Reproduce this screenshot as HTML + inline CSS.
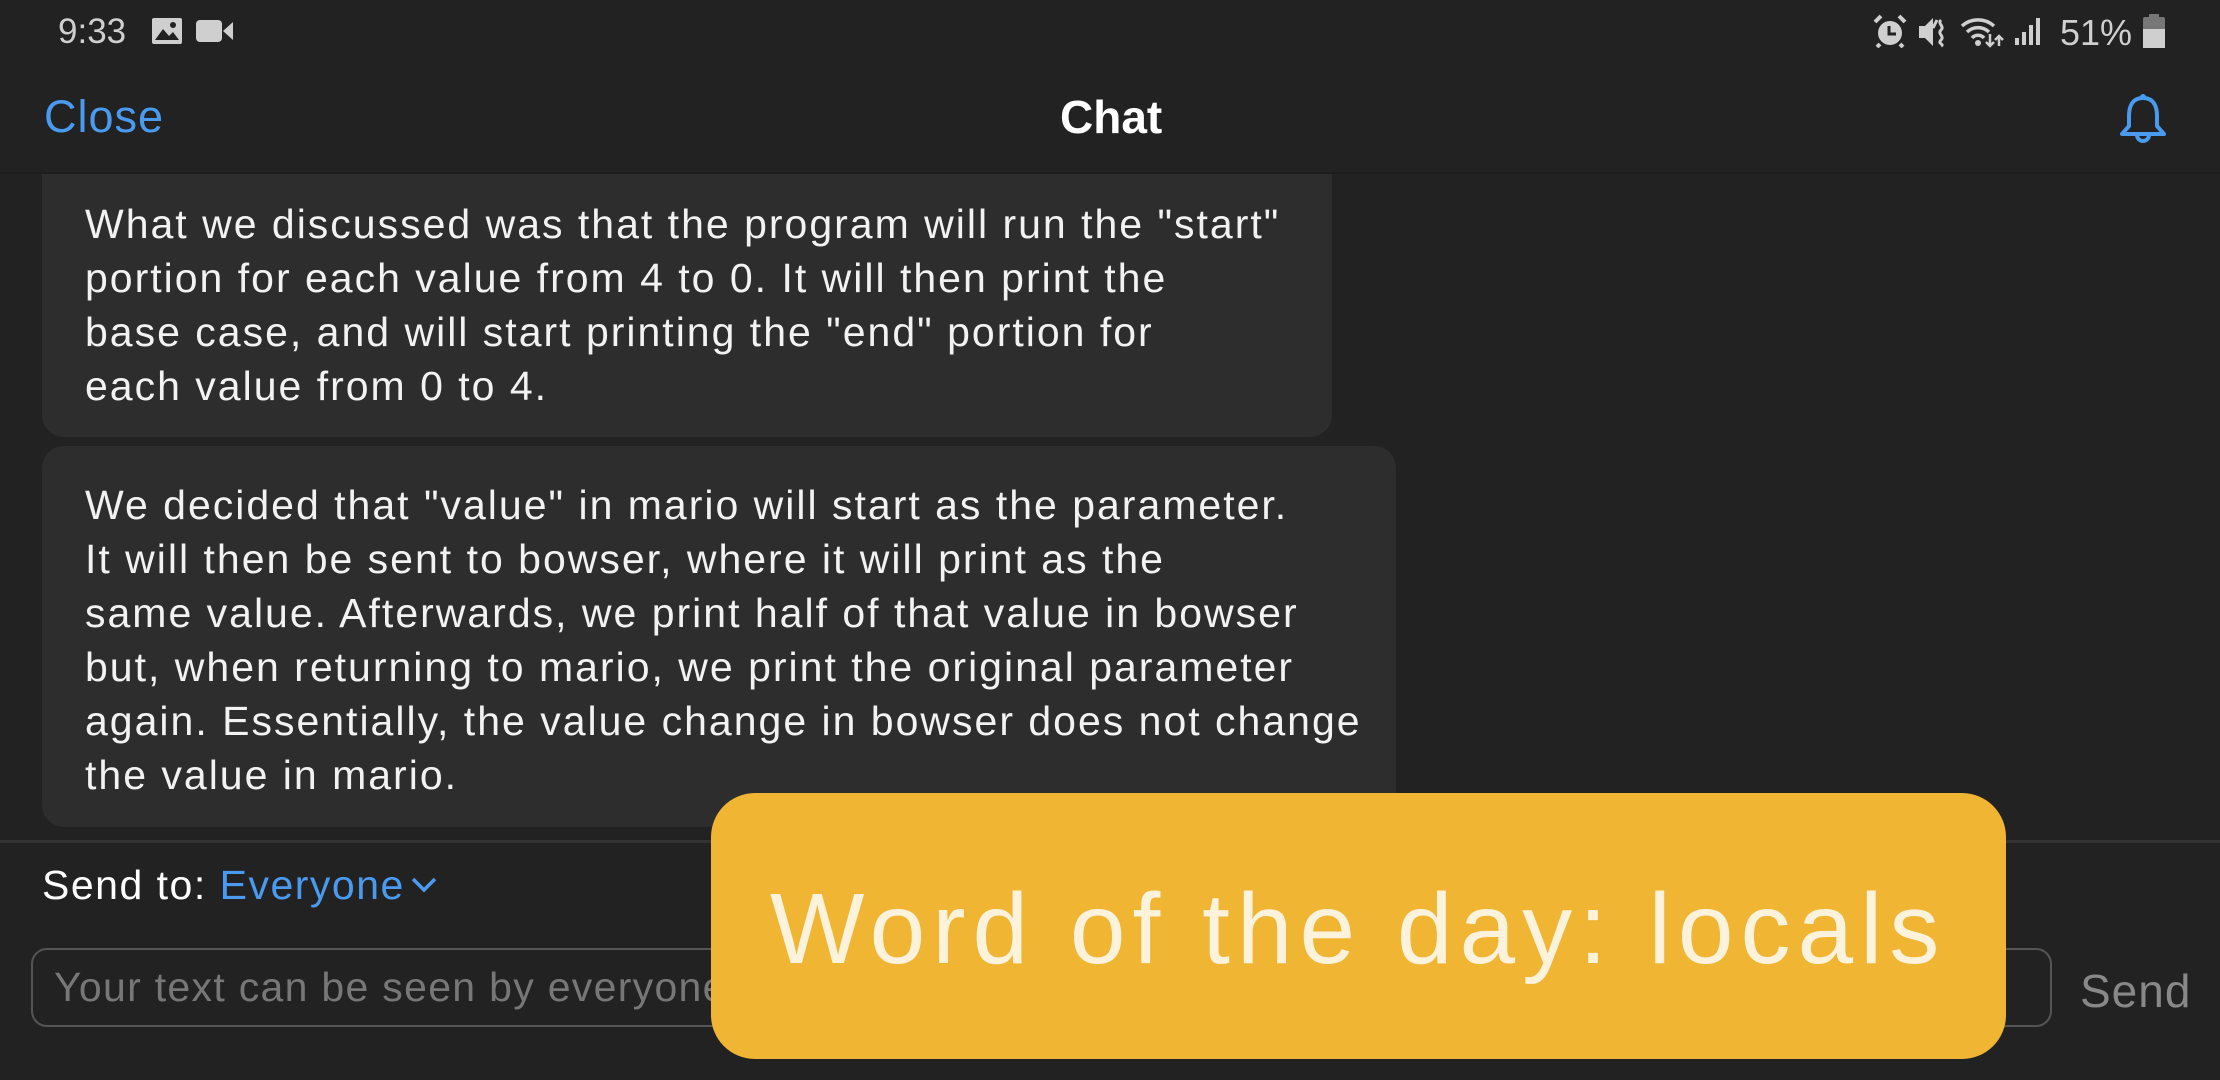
<!DOCTYPE html>
<html><head><meta charset="utf-8"><style>
*{margin:0;padding:0;box-sizing:border-box}
body{width:2220px;height:1080px;background:#222222;overflow:hidden;position:relative;font-family:"Liberation Sans",sans-serif;color:#fff}
.abs{position:absolute;white-space:nowrap}
.bubble{position:absolute;background:#2d2d2d;border-radius:22px}
.msg{position:absolute;left:85px;font-size:41px;letter-spacing:2px;line-height:54px;color:#f2f2f2;white-space:nowrap}
</style></head><body>
<!-- bubbles -->
<div class="bubble" style="left:42px;top:150px;width:1290px;height:287px"></div>
<div class="msg" style="top:197px">What we discussed was that the program will run the "start"<br>portion for each value from 4 to 0. It will then print the<br>base case, and will start printing the "end" portion for<br>each value from 0 to 4.</div>
<div class="bubble" style="left:42px;top:446px;width:1354px;height:381px"></div>
<div class="msg" style="top:478px">We decided that "value" in mario will start as the parameter.<br>It will then be sent to bowser, where it will print as the<br>same value. Afterwards, we print half of that value in bowser<br>but, when returning to mario, we print the original parameter<br>again. Essentially, the value change in bowser does not change<br>the value in mario.</div>
<!-- header bg -->
<div class="abs" style="left:0;top:0;width:2220px;height:172px;background:#222"></div>
<div class="abs" style="left:0;top:172px;width:2220px;height:2px;background:#1d1d1d"></div>
<!-- status bar -->
<div class="abs" style="left:58px;top:12px;font-size:35px;color:#cfcfcf">9:33</div>
<svg class="abs" style="left:151px;top:17px" width="32" height="28" viewBox="0 0 32 28"><rect x="1" y="1" width="30" height="26" rx="2" fill="#cfcfcf"/><path d="M4 23 L12 12 L18 19 L22 15 L28 23Z" fill="#222"/><circle cx="22" cy="8" r="3" fill="#222"/></svg>
<svg class="abs" style="left:196px;top:19px" width="38" height="24" viewBox="0 0 38 24"><rect x="0" y="1" width="26" height="22" rx="4" fill="#cfcfcf"/><path d="M27 12 L37 3 V21Z" fill="#cfcfcf"/></svg>
<svg class="abs" style="left:1872px;top:14px" width="36" height="34" viewBox="0 0 36 34"><circle cx="18" cy="19" r="12" fill="#cfcfcf"/><path d="M17 12v8h7" stroke="#222" stroke-width="3" fill="none"/><path d="M3 8 L9 2 M33 8 L27 2 M8 30 L5 33 M28 30 L31 33" stroke="#cfcfcf" stroke-width="4"/></svg>
<svg class="abs" style="left:1917px;top:16px" width="32" height="32" viewBox="0 0 32 32"><path d="M2 10h6l8-8v28l-8-8H2Z" fill="#cfcfcf"/><path d="M20 4 L16 12 M24 4c-4 4 4 6 0 10s4 6 0 10s4 4 0 6" stroke="#cfcfcf" stroke-width="3" fill="none"/></svg>
<svg class="abs" style="left:1960px;top:14px" width="44" height="34" viewBox="0 0 44 34"><path d="M2 12a24 24 0 0 1 32 0 M7 18a16 16 0 0 1 22 0 M12 24a8 8 0 0 1 12 0" stroke="#cfcfcf" stroke-width="3.5" fill="none"/><circle cx="18" cy="29" r="3" fill="#cfcfcf"/><path d="M30 20v12 M26 28l4 4 4-4 M39 32V22 M35 26l4-4 4 4" stroke="#cfcfcf" stroke-width="2.5" fill="none"/></svg>
<svg class="abs" style="left:2014px;top:16px" width="28" height="30" viewBox="0 0 28 30"><rect x="1" y="22" width="4" height="7" fill="#cfcfcf"/><rect x="8" y="16" width="4" height="13" fill="#cfcfcf"/><rect x="15" y="9" width="4" height="20" fill="#cfcfcf"/><rect x="22" y="2" width="4" height="27" fill="#cfcfcf"/></svg>
<div class="abs" style="left:2060px;top:12px;font-size:36px;color:#cfcfcf">51%</div>
<svg class="abs" style="left:2143px;top:14px" width="22" height="34" viewBox="0 0 22 34"><rect x="6" y="0" width="10" height="4" fill="#777"/><rect x="0" y="3" width="22" height="31" rx="2" fill="#777"/><rect x="0" y="15" width="22" height="19" fill="#cfcfcf"/></svg>
<!-- header -->
<div class="abs" style="left:44px;top:91px;font-size:45px;letter-spacing:1px;color:#4a9bf0">Close</div>
<div class="abs" style="left:1060px;top:90px;font-size:46px;font-weight:bold;color:#fff">Chat</div>
<svg class="abs" style="left:2117px;top:92px" width="52" height="54" viewBox="0 0 52 54"><path d="M26 6 C15 6 12 15 12 24 V34 L5 42 H47 L40 34 V24 C40 15 37 6 26 6Z" stroke="#4a9bf0" stroke-width="4" fill="none" stroke-linejoin="round"/><circle cx="26" cy="5" r="3" fill="#4a9bf0"/><path d="M20 43 a6 6 0 0 0 12 0" stroke="#4a9bf0" stroke-width="4" fill="none"/></svg>
<!-- bottom -->
<div class="abs" style="left:0;top:840px;width:2220px;height:3px;background:#333"></div>
<div class="abs" style="left:42px;top:862px;font-size:41px;letter-spacing:1.5px;color:#fff">Send to: <span style="color:#4a9bf0">Everyone</span></div>
<svg class="abs" style="left:410px;top:876px" width="28" height="18" viewBox="0 0 28 18"><path d="M3 3 L14 14 L25 3" stroke="#4a9bf0" stroke-width="3.5" fill="none"/></svg>
<div class="abs" style="left:31px;top:948px;width:2021px;height:79px;border:2px solid #555;border-radius:16px"></div>
<div class="abs" style="left:54px;top:964px;font-size:41px;letter-spacing:1.3px;color:#777">Your text can be seen by everyone</div>
<div class="abs" style="left:2080px;top:964px;font-size:46px;letter-spacing:1px;color:#888">Send</div>
<!-- yellow overlay -->
<div class="abs" style="left:711px;top:793px;width:1295px;height:266px;background:#f0b532;border-radius:44px"></div>
<div class="abs" style="left:770px;top:879px;font-size:100px;color:#fdf3dc;letter-spacing:7px;line-height:1">Word of the day: locals</div>
</body></html>
